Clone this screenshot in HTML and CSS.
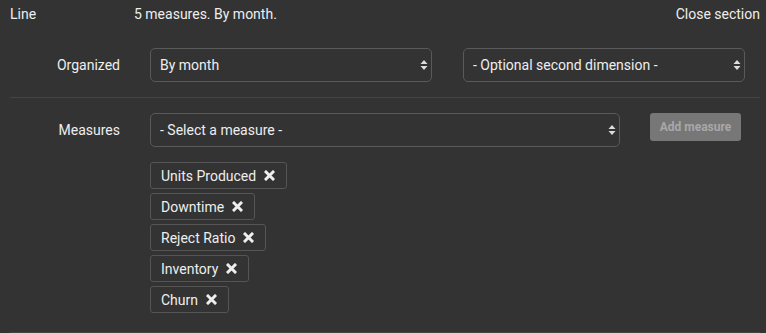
FILE: index.html
```html
<!DOCTYPE html>
<html lang="en">
<head>
    <meta charset="UTF-8">
    <title>Line section</title>
    <link rel="stylesheet" href="styles.css">
</head>
<body>
    <div class="section">
        <div class="section-head">
            <span class="section-type">Line</span>
            <span class="section-summary">5 measures. By month.</span>
            <a href="#" class="section-close">Close section</a>
        </div>

        <div class="form-row row-organized">
            <label class="row-label">Organized</label>
            <div class="row-fields">
                <div class="select-wrap wide">
                    <select class="dark-select"><option>By month</option></select>
                    <svg class="select-arrows" width="8" height="12" viewBox="0 0 8 12"><path d="M4 1 L7.5 5 H0.5 Z M4 11 L7.5 7 H0.5 Z" fill="#ddd"/></svg>
                </div>
                <div class="select-wrap wide">
                    <select class="dark-select"><option>- Optional second dimension -</option></select>
                    <svg class="select-arrows" width="8" height="12" viewBox="0 0 8 12"><path d="M4 1 L7.5 5 H0.5 Z M4 11 L7.5 7 H0.5 Z" fill="#ddd"/></svg>
                </div>
            </div>
        </div>

        <div class="form-row row-measures">
            <label class="row-label">Measures</label>
            <div class="row-main">
                <div class="row-fields">
                    <div class="select-wrap long">
                        <select class="dark-select"><option>- Select a measure -</option></select>
                        <svg class="select-arrows" width="8" height="12" viewBox="0 0 8 12"><path d="M4 1 L7.5 5 H0.5 Z M4 11 L7.5 7 H0.5 Z" fill="#ddd"/></svg>
                    </div>
                    <button class="add-btn" disabled>Add measure</button>
                </div>
                <ul class="tag-list">
                    <li class="tag">Units Produced <svg class="tag-x" width="11" height="11" viewBox="0 0 11 11"><path d="M2 2 L9 9 M9 2 L2 9" stroke="#eee" stroke-width="3" stroke-linecap="square"/></svg></li>
                    <li class="tag">Downtime <svg class="tag-x" width="11" height="11" viewBox="0 0 11 11"><path d="M2 2 L9 9 M9 2 L2 9" stroke="#eee" stroke-width="3" stroke-linecap="square"/></svg></li>
                    <li class="tag">Reject Ratio <svg class="tag-x" width="11" height="11" viewBox="0 0 11 11"><path d="M2 2 L9 9 M9 2 L2 9" stroke="#eee" stroke-width="3" stroke-linecap="square"/></svg></li>
                    <li class="tag">Inventory <svg class="tag-x" width="11" height="11" viewBox="0 0 11 11"><path d="M2 2 L9 9 M9 2 L2 9" stroke="#eee" stroke-width="3" stroke-linecap="square"/></svg></li>
                    <li class="tag">Churn <svg class="tag-x" width="11" height="11" viewBox="0 0 11 11"><path d="M2 2 L9 9 M9 2 L2 9" stroke="#eee" stroke-width="3" stroke-linecap="square"/></svg></li>
                </ul>
            </div>
        </div>
    </div>
</body>
</html>
```

FILE: styles.css
```css
body {
    margin: 0;
    padding: 0;
    font-family: Roboto, 'Liberation Sans', sans-serif;
    font-size: 14px;
    background-color: #333;
    color: #eee;
}

.section {
    margin: 0 6px 0 10px;
    height: 332px;
    border-bottom: 1px solid #454545;
}

/* Header line */
.section-head {
    display: flex;
    align-items: center;
    height: 28px;
}

.section-type {
    width: 124px;
}

.section-summary {
    flex: 1;
}

.section-close {
    color: #eee;
    text-decoration: none;
}

/* Form rows */
.form-row {
    display: flex;
}

.row-label {
    width: 110px;
    text-align: right;
    margin-right: 30px;
    line-height: 34px;
}

.row-organized {
    padding: 20px 0 15px;
    border-bottom: 1px solid #454545;
}

.row-measures {
    padding-top: 15px;
}

.row-fields {
    display: flex;
    align-items: flex-start;
    gap: 31px;
}

.row-measures .row-fields {
    gap: 30px;
}

.select-wrap {
    position: relative;
}

.select-wrap.wide {
    width: 282px;
}

.select-wrap.long {
    width: 470px;
}

.dark-select {
    appearance: none;
    -webkit-appearance: none;
    width: 100%;
    height: 34px;
    padding: 0 24px 0 9px;
    background-color: #333;
    color: #eee;
    border: 1px solid #5a5a5a;
    border-radius: 5px;
    font-family: inherit;
    font-size: 14px;
    outline: none;
}

.select-arrows {
    position: absolute;
    right: 4px;
    top: 11px;
    pointer-events: none;
}

.add-btn {
    width: 91px;
    height: 28px;
    padding: 0;
    background-color: #777;
    color: #a8a8a8;
    border: none;
    border-radius: 3px;
    font-family: inherit;
    font-size: 12px;
    font-weight: bold;
}

/* Selected measures */
.tag-list {
    list-style: none;
    margin: 15px 0 0;
    padding: 0;
    display: flex;
    flex-direction: column;
    align-items: flex-start;
    gap: 4px;
}

.tag {
    display: flex;
    align-items: center;
    gap: 8px;
    height: 25px;
    padding: 0 11px 0 10px;
    border: 1px solid #555;
    border-radius: 3px;
}
```
